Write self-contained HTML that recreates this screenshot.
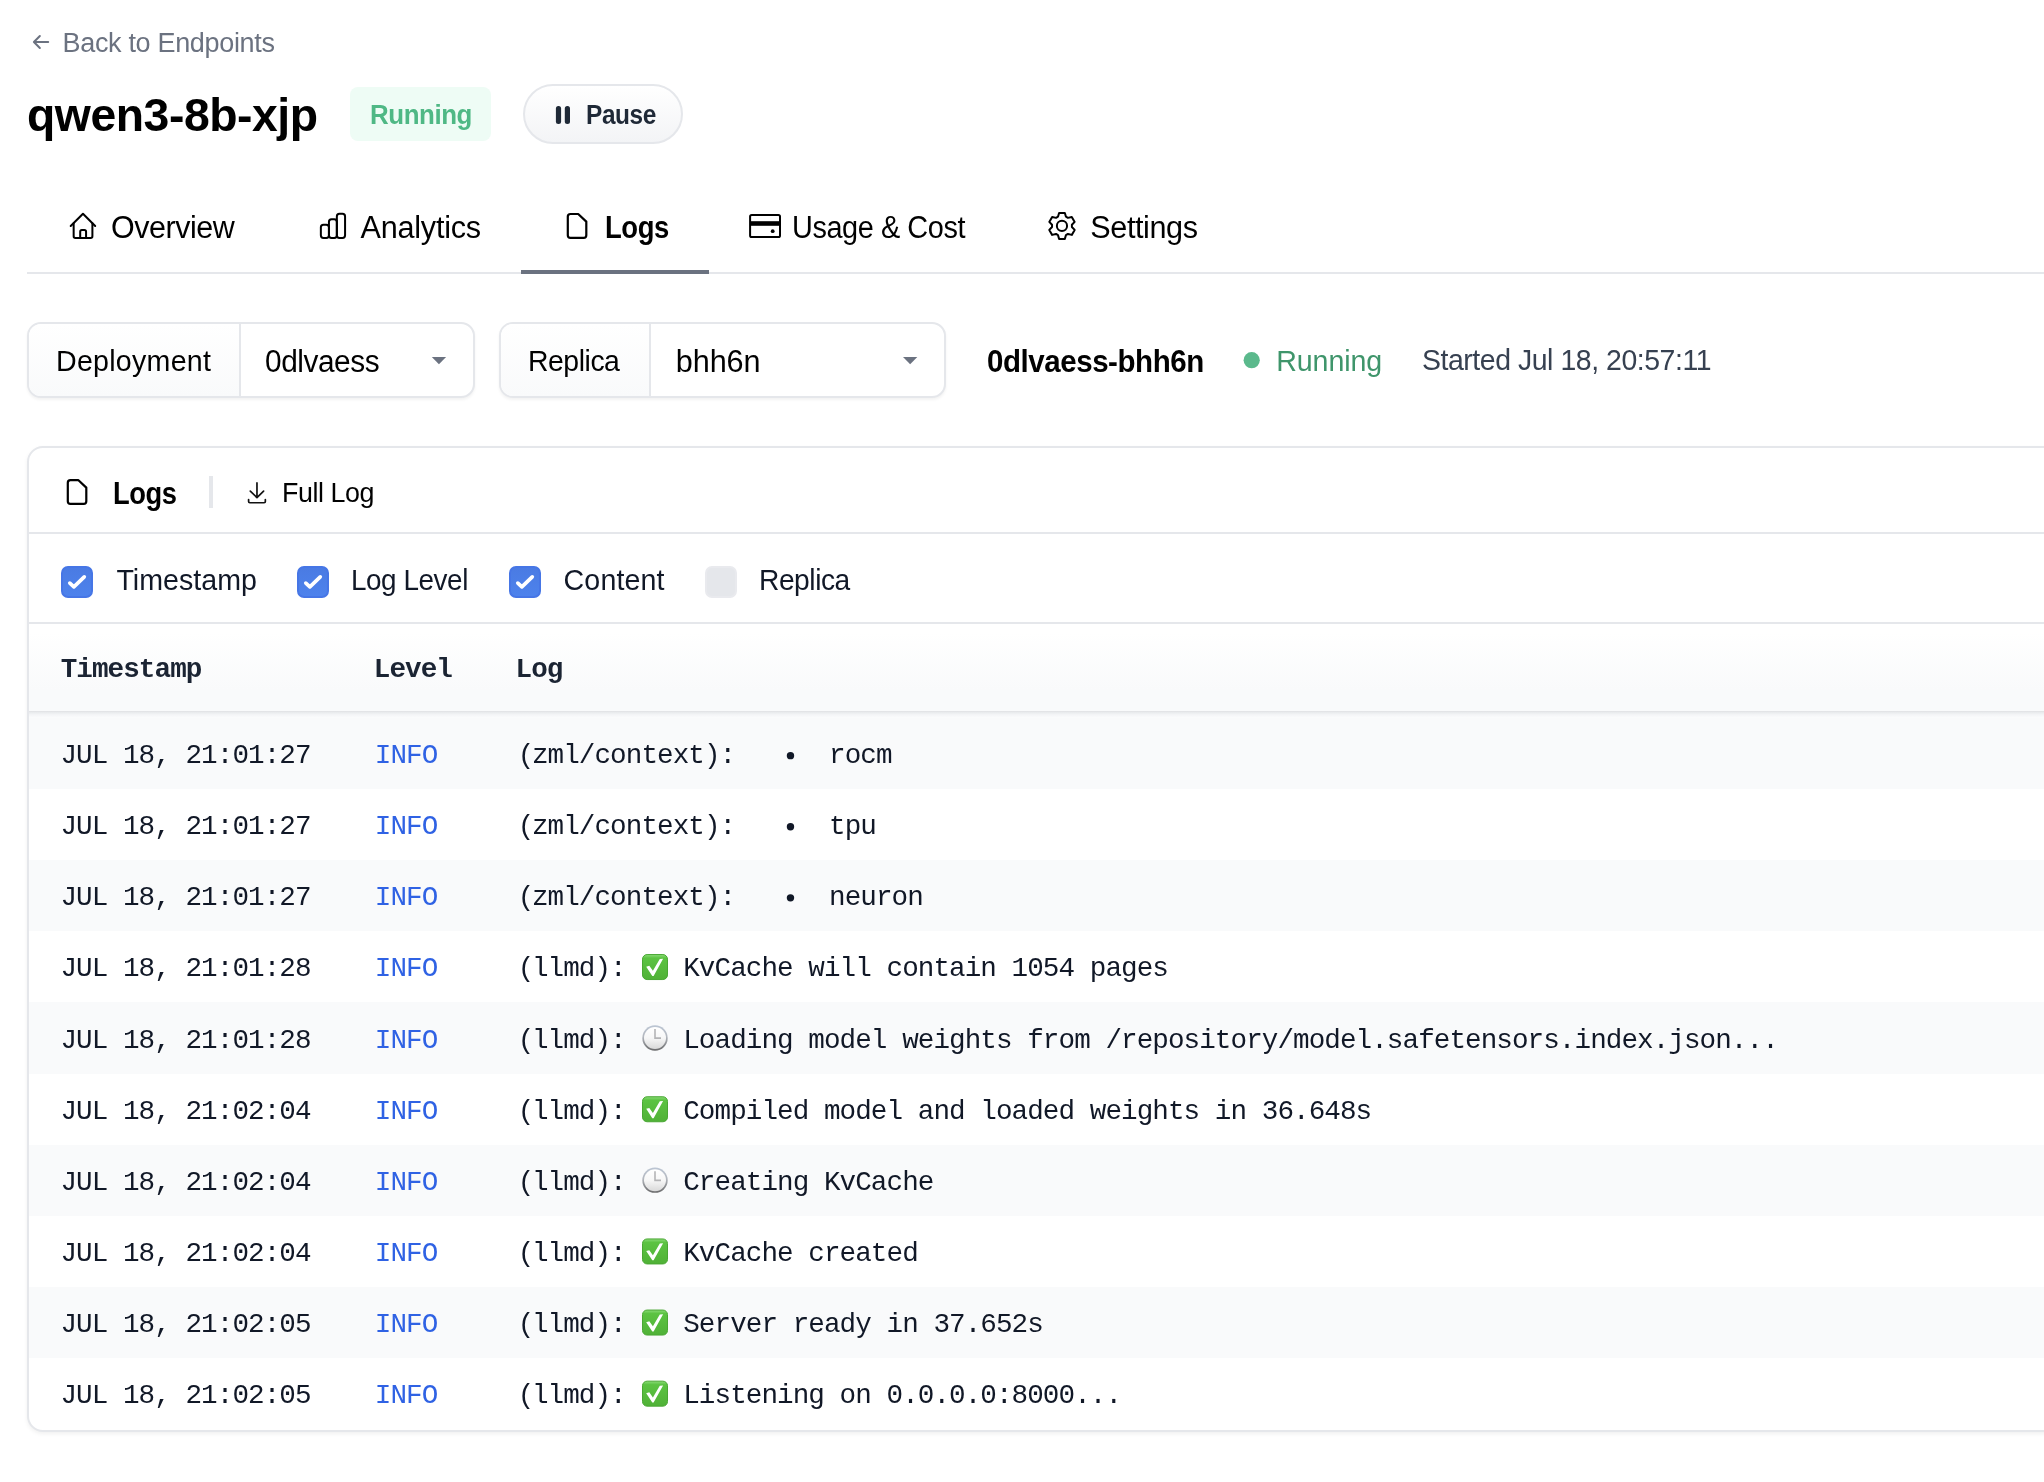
<!DOCTYPE html>
<html lang="en"><head><meta charset="utf-8"><title>qwen3-8b-xjp · Logs</title>
<style>
*{box-sizing:border-box}
html,body{margin:0;padding:0;background:#fff}
body{width:2044px;height:1482px;overflow:hidden;position:relative;font-family:"Liberation Sans", sans-serif;-webkit-font-smoothing:antialiased}
.t{position:absolute;white-space:pre;font-family:"Liberation Sans", sans-serif;display:inline-block;transform-origin:0 0}
.m{position:absolute;white-space:pre;font-family:"Liberation Mono", monospace;font-size:27.6px;line-height:27.6px;letter-spacing:-0.9227px}
.sp{display:inline-block;width:26.2px;height:1px}
.lp{font-weight:inherit;position:relative;left:1.4px}
.abs{position:absolute}
.txt{position:absolute;left:0;top:0;width:2044px;height:1482px;will-change:transform;opacity:.999}
.badge{left:350px;top:87px;width:141px;height:54px;border-radius:8px;background:#eefcf5}
.pause{left:523px;top:84px;width:160px;height:60px;border-radius:30px;border:2px solid #e5e7eb;background:linear-gradient(#fff,#f3f4f6)}
.tabline{left:27px;top:272px;width:2100px;height:2px;background:#e5e7eb}
.tabact{left:521px;top:270px;width:188px;height:4px;background:#6b7280}
.sel{top:322px;height:76px;border:2px solid #e5e7eb;border-radius:14px;background:#fff;box-shadow:0 2px 3px rgba(0,0,0,.05);overflow:hidden}
.sel i{position:absolute;left:0;top:0;bottom:0;display:block;background:linear-gradient(#fff,#f9fafb);border-right:2px solid #e5e7eb}
.panel{left:27px;top:446px;width:2100px;height:986px;border:2px solid #e5e7eb;border-radius:16px;background:#fff;box-shadow:0 2px 4px rgba(0,0,0,.06)}
.hl{left:29px;width:2100px;height:2px;background:#e5e7eb}
.thead{left:29px;top:624px;width:2100px;height:87px;background:linear-gradient(#fff 10%,#f9fafb 75%)}
.tgap{left:29px;top:711px;width:2100px;height:7px;background:linear-gradient(#dfe0e3,#e9ebed 20%,#f3f4f6 50%,#f9fafb 85%,#fbfcfc)}
.stripe{position:absolute;left:29px;width:2100px;background:#f9fafb}
.vdiv{left:209px;top:476px;width:4px;height:32px;background:#e5e7eb}
.cb{top:566px;width:32px;height:32px;border-radius:7px;background:linear-gradient(#4a7be3,#4d82ec);border:2px solid #4676e6}
.cb.off{background:#e5e7eb;border-color:#e9eaee}
svg.ov{position:absolute;left:0;top:0;width:2044px;height:1482px;overflow:visible}
</style></head>
<body>
<div class="abs badge"></div>
<div class="abs pause"></div>
<div class="abs tabline"></div>
<div class="abs tabact"></div>
<div class="abs sel" style="left:27px;width:448px"><i style="width:212px"></i></div>
<div class="abs sel" style="left:499px;width:447px"><i style="width:150px"></i></div>
<div class="abs panel"></div>
<div class="abs tgap"></div>
<div class="stripe" style="top:718px;height:71px"></div>
<div class="stripe" style="top:860px;height:71px"></div>
<div class="stripe" style="top:1002px;height:72px"></div>
<div class="stripe" style="top:1145px;height:71px"></div>
<div class="stripe" style="top:1287px;height:71px"></div>
<div class="abs thead"></div>
<div class="abs hl" style="top:532px"></div>
<div class="abs hl" style="top:622px"></div>
<div class="abs vdiv"></div>
<div class="abs cb" style="left:61px"></div>
<div class="abs cb" style="left:297px"></div>
<div class="abs cb" style="left:509px"></div>
<div class="abs cb off" style="left:705px"></div>
<div class="txt">
<span class="t" style="left:62.50px;top:30.14px;font-size:27.0px;line-height:27.0px;font-weight:400;color:#6b7280;letter-spacing:-0.321px;">Back to Endpoints</span>
<span class="t" style="left:27.30px;top:92.04px;font-size:46.5px;line-height:46.5px;font-weight:700;color:#000000;letter-spacing:-0.450px;transform:scaleX(0.9963);">qwen3-8b-xjp</span>
<span class="t" style="left:370.04px;top:101.64px;font-size:27.0px;line-height:27.0px;font-weight:700;color:#4fb885;letter-spacing:-0.450px;transform:scaleX(0.9590);">Running</span>
<span class="t" style="left:586.10px;top:101.64px;font-size:27.0px;line-height:27.0px;font-weight:700;color:#1f2937;letter-spacing:-0.450px;transform:scaleX(0.9044);">Pause</span>
<span class="t" style="left:111.31px;top:212.00px;font-size:30.6px;line-height:30.6px;font-weight:400;color:#000000;letter-spacing:-0.450px;transform:scaleX(0.9947);">Overview</span>
<span class="t" style="left:360.60px;top:212.00px;font-size:30.6px;line-height:30.6px;font-weight:400;color:#000000;letter-spacing:-0.240px;">Analytics</span>
<span class="t" style="left:605.41px;top:212.00px;font-size:30.6px;line-height:30.6px;font-weight:700;color:#000000;letter-spacing:-0.450px;transform:scaleX(0.8965);">Logs</span>
<span class="t" style="left:792.11px;top:212.00px;font-size:30.6px;line-height:30.6px;font-weight:400;color:#000000;letter-spacing:-0.450px;transform:scaleX(0.9435);">Usage &amp; Cost</span>
<span class="t" style="left:1090.30px;top:212.00px;font-size:30.6px;line-height:30.6px;font-weight:400;color:#000000;letter-spacing:-0.407px;">Settings</span>
<span class="t" style="left:56.00px;top:346.79px;font-size:28.6px;line-height:28.6px;font-weight:400;color:#000000;letter-spacing:0.263px;">Deployment</span>
<span class="t" style="left:265.03px;top:345.90px;font-size:30.6px;line-height:30.6px;font-weight:400;color:#000000;letter-spacing:-0.450px;transform:scaleX(0.9742);">0dlvaess</span>
<span class="t" style="left:528.02px;top:346.79px;font-size:28.6px;line-height:28.6px;font-weight:400;color:#000000;letter-spacing:-0.450px;transform:scaleX(0.9917);">Replica</span>
<span class="t" style="left:675.80px;top:345.90px;font-size:30.6px;line-height:30.6px;font-weight:400;color:#000000;letter-spacing:-0.090px;">bhh6n</span>
<span class="t" style="left:986.94px;top:345.80px;font-size:30.6px;line-height:30.6px;font-weight:700;color:#000000;letter-spacing:-0.450px;transform:scaleX(0.9637);">0dlvaess-bhh6n</span>
<span class="t" style="left:1276.20px;top:346.79px;font-size:28.6px;line-height:28.6px;font-weight:400;color:#3f956b;letter-spacing:-0.085px;">Running</span>
<span class="t" style="left:1421.71px;top:346.39px;font-size:28.6px;line-height:28.6px;font-weight:400;color:#374151;letter-spacing:-0.450px;transform:scaleX(0.9943);">Started Jul 18, 20:57:11</span>
<span class="t" style="left:112.92px;top:478.00px;font-size:30.6px;line-height:30.6px;font-weight:700;color:#000000;letter-spacing:-0.450px;transform:scaleX(0.8921);">Logs</span>
<span class="t" style="left:281.81px;top:480.24px;font-size:27.0px;line-height:27.0px;font-weight:400;color:#000000;letter-spacing:-0.450px;transform:scaleX(0.9946);">Full Log</span>
<span class="t" style="left:116.40px;top:565.79px;font-size:28.6px;line-height:28.6px;font-weight:400;color:#111827;letter-spacing:0.020px;">Timestamp</span>
<span class="t" style="left:351.25px;top:565.79px;font-size:28.6px;line-height:28.6px;font-weight:400;color:#111827;letter-spacing:-0.450px;transform:scaleX(0.9747);">Log Level</span>
<span class="t" style="left:563.60px;top:565.79px;font-size:28.6px;line-height:28.6px;font-weight:400;color:#111827;letter-spacing:0.116px;">Content</span>
<span class="t" style="left:758.53px;top:565.79px;font-size:28.6px;line-height:28.6px;font-weight:400;color:#111827;letter-spacing:-0.450px;transform:scaleX(0.9851);">Replica</span>
<span class="m" style="left:60.70px;top:656.05px;color:#1b2433;font-weight:700;">Timestamp</span>
<span class="m" style="left:373.80px;top:656.05px;color:#1b2433;font-weight:700;">Level</span>
<span class="m" style="left:515.50px;top:656.05px;color:#1b2433;font-weight:700;">Log</span>
<span class="m" style="left:60.40px;top:742.10px;color:#111827;font-weight:400;">JUL 18, 21:01:27</span>
<span class="m" style="left:374.80px;top:742.10px;color:#2f62e4;font-weight:400;">INFO</span>
<span class="m" style="left:516.30px;top:742.10px;color:#111827;font-weight:400;"><b class="lp">(</b>zml/context):      rocm</span>
<span class="m" style="left:60.40px;top:813.20px;color:#111827;font-weight:400;">JUL 18, 21:01:27</span>
<span class="m" style="left:374.80px;top:813.20px;color:#2f62e4;font-weight:400;">INFO</span>
<span class="m" style="left:516.30px;top:813.20px;color:#111827;font-weight:400;"><b class="lp">(</b>zml/context):      tpu</span>
<span class="m" style="left:60.40px;top:884.30px;color:#111827;font-weight:400;">JUL 18, 21:01:27</span>
<span class="m" style="left:374.80px;top:884.30px;color:#2f62e4;font-weight:400;">INFO</span>
<span class="m" style="left:516.30px;top:884.30px;color:#111827;font-weight:400;"><b class="lp">(</b>zml/context):      neuron</span>
<span class="m" style="left:60.40px;top:955.40px;color:#111827;font-weight:400;">JUL 18, 21:01:28</span>
<span class="m" style="left:374.80px;top:955.40px;color:#2f62e4;font-weight:400;">INFO</span>
<span class="m" style="left:516.30px;top:955.40px;color:#111827;font-weight:400;"><b class="lp">(</b>llmd): <i class="sp"></i> KvCache will contain 1054 pages</span>
<span class="m" style="left:60.40px;top:1026.50px;color:#111827;font-weight:400;">JUL 18, 21:01:28</span>
<span class="m" style="left:374.80px;top:1026.50px;color:#2f62e4;font-weight:400;">INFO</span>
<span class="m" style="left:516.30px;top:1026.50px;color:#111827;font-weight:400;"><b class="lp">(</b>llmd): <i class="sp"></i> Loading model weights from /repository/model.safetensors.index.json...</span>
<span class="m" style="left:60.40px;top:1097.60px;color:#111827;font-weight:400;">JUL 18, 21:02:04</span>
<span class="m" style="left:374.80px;top:1097.60px;color:#2f62e4;font-weight:400;">INFO</span>
<span class="m" style="left:516.30px;top:1097.60px;color:#111827;font-weight:400;"><b class="lp">(</b>llmd): <i class="sp"></i> Compiled model and loaded weights in 36.648s</span>
<span class="m" style="left:60.40px;top:1168.70px;color:#111827;font-weight:400;">JUL 18, 21:02:04</span>
<span class="m" style="left:374.80px;top:1168.70px;color:#2f62e4;font-weight:400;">INFO</span>
<span class="m" style="left:516.30px;top:1168.70px;color:#111827;font-weight:400;"><b class="lp">(</b>llmd): <i class="sp"></i> Creating KvCache</span>
<span class="m" style="left:60.40px;top:1239.80px;color:#111827;font-weight:400;">JUL 18, 21:02:04</span>
<span class="m" style="left:374.80px;top:1239.80px;color:#2f62e4;font-weight:400;">INFO</span>
<span class="m" style="left:516.30px;top:1239.80px;color:#111827;font-weight:400;"><b class="lp">(</b>llmd): <i class="sp"></i> KvCache created</span>
<span class="m" style="left:60.40px;top:1310.90px;color:#111827;font-weight:400;">JUL 18, 21:02:05</span>
<span class="m" style="left:374.80px;top:1310.90px;color:#2f62e4;font-weight:400;">INFO</span>
<span class="m" style="left:516.30px;top:1310.90px;color:#111827;font-weight:400;"><b class="lp">(</b>llmd): <i class="sp"></i> Server ready in 37.652s</span>
<span class="m" style="left:60.40px;top:1382.00px;color:#111827;font-weight:400;">JUL 18, 21:02:05</span>
<span class="m" style="left:374.80px;top:1382.00px;color:#2f62e4;font-weight:400;">INFO</span>
<span class="m" style="left:516.30px;top:1382.00px;color:#111827;font-weight:400;"><b class="lp">(</b>llmd): <i class="sp"></i> Listening on 0.0.0.0:8000...</span>
</div>
<svg class="ov" viewBox="0 0 2044 1482">
<defs><linearGradient id="gok" x1="0" y1="0" x2="0" y2="1"><stop offset="0" stop-color="#8bdc78"/><stop offset=".14" stop-color="#5cc342"/><stop offset="1" stop-color="#50b137"/></linearGradient><linearGradient id="gring" x1="0" y1="0" x2="0" y2="1"><stop offset="0" stop-color="#bcc6d4"/><stop offset=".45" stop-color="#b3b7be"/><stop offset="1" stop-color="#6a6a6b"/></linearGradient><linearGradient id="gface" x1="0" y1="0" x2="0" y2="1"><stop offset="0" stop-color="#ffffff"/><stop offset=".5" stop-color="#f7f7f7"/><stop offset="1" stop-color="#d9d9d9"/></linearGradient></defs>
<path d="M39.85 36.05 L33.9 42 L39.85 47.95 M34.2 42 H48.2" fill="none" stroke="#6b7280" stroke-width="2" stroke-linecap="round" stroke-linejoin="round"/>
<rect x="555.9" y="106" width="5.2" height="18" rx="2.5" fill="#1f2937"/><rect x="564.8" y="106" width="5.2" height="18" rx="2.5" fill="#1f2937"/>
<path d="M70.7 226 L82.97 213.8 L95.2 226" fill="none" stroke="#000" stroke-width="2" stroke-linecap="round" stroke-linejoin="round"/>
<path d="M73.66 223.3 V236.2 Q73.66 237.9 75.4 237.9 H90.7 Q92.4 237.9 92.4 236.2 V223.3" fill="none" stroke="#000" stroke-width="2" stroke-linecap="round" stroke-linejoin="round"/>
<path d="M80.2 237.6 V231.7 Q80.2 230 81.9 230 H84.4 Q86.07 230 86.07 231.7 V237.6" fill="none" stroke="#000" stroke-width="2" stroke-linecap="round" stroke-linejoin="round"/>
<rect x="320.86" y="224.7" width="8.07" height="13.20" rx="2.6" fill="none" stroke="#000" stroke-width="2" stroke-linecap="round" stroke-linejoin="round"/>
<rect x="328.93" y="219.3" width="7.92" height="18.60" rx="2.6" fill="none" stroke="#000" stroke-width="2" stroke-linecap="round" stroke-linejoin="round"/>
<rect x="336.85" y="213.86" width="8.22" height="24.04" rx="2.6" fill="none" stroke="#000" stroke-width="2" stroke-linecap="round" stroke-linejoin="round"/>
<path d="M567.80 216.60 Q567.80 214.00 570.40 214.00 L578.20 214.00 L586.30 221.60 L586.30 235.30 Q586.30 237.90 583.70 237.90 L570.40 237.90 Q567.80 237.90 567.80 235.30 Z" fill="none" stroke="#000" stroke-width="2.2" stroke-linecap="round" stroke-linejoin="round"/>
<path d="M67.80 482.65 Q67.80 480.05 70.40 480.05 L78.20 480.05 L86.30 487.65 L86.30 501.35 Q86.30 503.95 83.70 503.95 L70.40 503.95 Q67.80 503.95 67.80 501.35 Z" fill="none" stroke="#000" stroke-width="2.2" stroke-linecap="round" stroke-linejoin="round"/>
<rect x="750.1" y="214.9" width="29.9" height="22.2" rx="1.6" fill="none" stroke="#000" stroke-width="2" stroke-linecap="round" stroke-linejoin="round"/>
<rect x="750" y="221.2" width="30" height="4.6" fill="#000"/><circle cx="772.7" cy="231.2" r="1.9" fill="#000"/>
<path d="M1057.97 216.74 L1059.09 212.92 L1064.85 212.92 L1065.97 216.74 L1067.90 217.85 L1071.78 216.91 L1074.65 221.90 L1071.91 224.79 L1071.91 227.01 L1074.65 229.90 L1071.78 234.89 L1067.90 233.95 L1065.97 235.06 L1064.85 238.88 L1059.09 238.88 L1057.97 235.06 L1056.04 233.95 L1052.16 234.89 L1049.29 229.90 L1052.03 227.01 L1052.03 224.79 L1049.29 221.90 L1052.16 216.91 L1056.04 217.85 Z" fill="none" stroke="#000" stroke-width="2" stroke-linecap="round" stroke-linejoin="round"/>
<circle cx="1061.97" cy="225.9" r="5.1" fill="none" stroke="#000" stroke-width="2" stroke-linecap="round" stroke-linejoin="round"/>
<path d="M256.97 482.9 V497.3 M250.3 491.1 L256.97 497.6 L263.6 491.1" fill="none" stroke="#111" stroke-width="1.7" stroke-linecap="round" stroke-linejoin="round"/>
<path d="M248.6 499.6 V501.5 Q248.6 502.75 249.9 502.75 H264.1 Q265.35 502.75 265.35 501.5 V499.6" fill="none" stroke="#111" stroke-width="1.7" stroke-linecap="round" stroke-linejoin="round"/>
<path d="M431.8 357 H446.1 L438.95 364.2 Z" fill="#6b7280"/>
<path d="M903.0 357 H917.3 L910.15 364.2 Z" fill="#6b7280"/>
<circle cx="1251.7" cy="360.2" r="8.1" fill="#5bb98c"/>
<path d="M69.83 583.1 L73.87 586.8 L84.26 576.9" fill="none" stroke="#fff" stroke-width="3.7" stroke-linecap="round" stroke-linejoin="round"/>
<path d="M305.83 583.1 L309.87 586.8 L320.26 576.9" fill="none" stroke="#fff" stroke-width="3.7" stroke-linecap="round" stroke-linejoin="round"/>
<path d="M517.83 583.1 L521.87 586.8 L532.26 576.9" fill="none" stroke="#fff" stroke-width="3.7" stroke-linecap="round" stroke-linejoin="round"/>
<g transform="translate(642.00 954.05)"><rect x=".5" y=".5" width="25" height="25" rx="4.6" fill="url(#gok)" stroke="#49a733" stroke-width="1"/><path d="M4.2 12.6 L7.3 11.7 L10.9 16.8 L17.8 5.0 L21.1 4.8 L11.6 21.9 L10.3 21.9 Z" fill="#fff"/></g>
<g transform="translate(642.00 1025.05)"><circle cx="13" cy="12.9" r="12.7" fill="url(#gring)"/><circle cx="13" cy="13" r="11.0" fill="url(#gface)"/><path d="M13 3.9 V13.1 H19" fill="none" stroke="#b4b4b6" stroke-width="1.6"/></g>
<g transform="translate(642.00 1096.25)"><rect x=".5" y=".5" width="25" height="25" rx="4.6" fill="url(#gok)" stroke="#49a733" stroke-width="1"/><path d="M4.2 12.6 L7.3 11.7 L10.9 16.8 L17.8 5.0 L21.1 4.8 L11.6 21.9 L10.3 21.9 Z" fill="#fff"/></g>
<g transform="translate(642.00 1167.25)"><circle cx="13" cy="12.9" r="12.7" fill="url(#gring)"/><circle cx="13" cy="13" r="11.0" fill="url(#gface)"/><path d="M13 3.9 V13.1 H19" fill="none" stroke="#b4b4b6" stroke-width="1.6"/></g>
<g transform="translate(642.00 1238.45)"><rect x=".5" y=".5" width="25" height="25" rx="4.6" fill="url(#gok)" stroke="#49a733" stroke-width="1"/><path d="M4.2 12.6 L7.3 11.7 L10.9 16.8 L17.8 5.0 L21.1 4.8 L11.6 21.9 L10.3 21.9 Z" fill="#fff"/></g>
<g transform="translate(642.00 1309.55)"><rect x=".5" y=".5" width="25" height="25" rx="4.6" fill="url(#gok)" stroke="#49a733" stroke-width="1"/><path d="M4.2 12.6 L7.3 11.7 L10.9 16.8 L17.8 5.0 L21.1 4.8 L11.6 21.9 L10.3 21.9 Z" fill="#fff"/></g>
<g transform="translate(642.00 1380.65)"><rect x=".5" y=".5" width="25" height="25" rx="4.6" fill="url(#gok)" stroke="#49a733" stroke-width="1"/><path d="M4.2 12.6 L7.3 11.7 L10.9 16.8 L17.8 5.0 L21.1 4.8 L11.6 21.9 L10.3 21.9 Z" fill="#fff"/></g>
<circle cx="790.48" cy="755.65" r="3.7" fill="#111827"/>
<circle cx="790.48" cy="826.75" r="3.7" fill="#111827"/>
<circle cx="790.48" cy="897.85" r="3.7" fill="#111827"/>
</svg>
</body></html>
